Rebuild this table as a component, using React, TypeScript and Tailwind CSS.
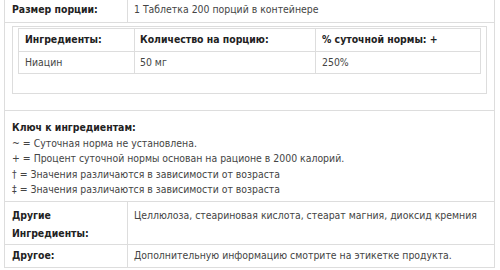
import React from "react";

const keyLines = [
  ["~", "Суточная норма не установлена."],
  ["+", "Процент суточной нормы основан на рационе в 2000 калорий."],
  ["†", "Значения различаются в зависимости от возраста"],
  ["‡", "Значения различаются в зависимости от возраста"],
];

const App = () => {
  return (
    <div className="w-[500px] h-[270px] overflow-hidden bg-white font-['DejaVu_Sans_Condensed','DejaVu_Sans',sans-serif] font-stretch-semi-condensed text-[10.4px] text-[#444]">
      <table className="ml-[4px] mt-[-3px] w-[491px] border-collapse table-fixed">
        <colgroup>
          <col className="w-[123px]" />
          <col />
        </colgroup>
        <tbody>
          <tr className="h-[25px]">
            <td className="border border-[#ddd] px-[7px] font-bold text-[#222]">
              Размер порции:
            </td>
            <td className="border border-[#ddd] px-[6px]">
              1 Таблетка 200 порций в контейнере
            </td>
          </tr>
          <tr className="h-[88px]">
            <td colSpan={2} className="border border-[#ddd] px-[7px] align-top pt-[3px]">
              <div className="border border-[#ddd] px-[5px] pt-[1px] pb-[19px]">
                <table className="w-full border-collapse table-fixed">
                  <colgroup>
                    <col className="w-[116px]" />
                    <col className="w-[181px]" />
                    <col />
                  </colgroup>
                  <tbody>
                    <tr className="h-[23px]">
                      <td className="border border-[#ddd] px-[6px] font-bold text-[#222]">
                        Ингредиенты:
                      </td>
                      <td className="border border-[#ddd] px-[5px] font-bold text-[#222]">
                        Количество на порцию:
                      </td>
                      <td className="border border-[#ddd] px-[6px] font-bold text-[#222]">
                        % суточной нормы: +
                      </td>
                    </tr>
                    <tr className="h-[22px]">
                      <td className="border border-[#ddd] px-[6px]">Ниацин</td>
                      <td className="border border-[#ddd] px-[5px]">50 мг</td>
                      <td className="border border-[#ddd] px-[6px]">250%</td>
                    </tr>
                  </tbody>
                </table>
              </div>
            </td>
          </tr>
          <tr className="h-[91px]">
            <td colSpan={2} className="border border-[#ddd] px-[7px] align-top pt-[9px] leading-[15.6px]">
              <div className="font-bold text-[#222]">Ключ к ингредиентам:</div>
              {keyLines.map(([sym, text]) => (
                <div key={text + sym}>
                  {sym} = {text}
                </div>
              ))}
            </td>
          </tr>
          <tr className="h-[43px]">
            <td className="border border-[#ddd] px-[7px] align-top pt-[4px] leading-[18px] font-bold text-[#222]">
              Другие Ингредиенты:
            </td>
            <td className="border border-[#ddd] px-[6px] align-top pt-[4px] leading-[18px]">
              Целлюлоза, стеариновая кислота, стеарат магния, диоксид кремния
            </td>
          </tr>
          <tr className="h-[23px]">
            <td className="border border-[#ddd] px-[7px] font-bold text-[#222]">Другое:</td>
            <td className="border border-[#ddd] px-[6px]">
              Дополнительную информацию смотрите на этикетке продукта.
            </td>
          </tr>
        </tbody>
      </table>
    </div>
  );
};

export default App;
